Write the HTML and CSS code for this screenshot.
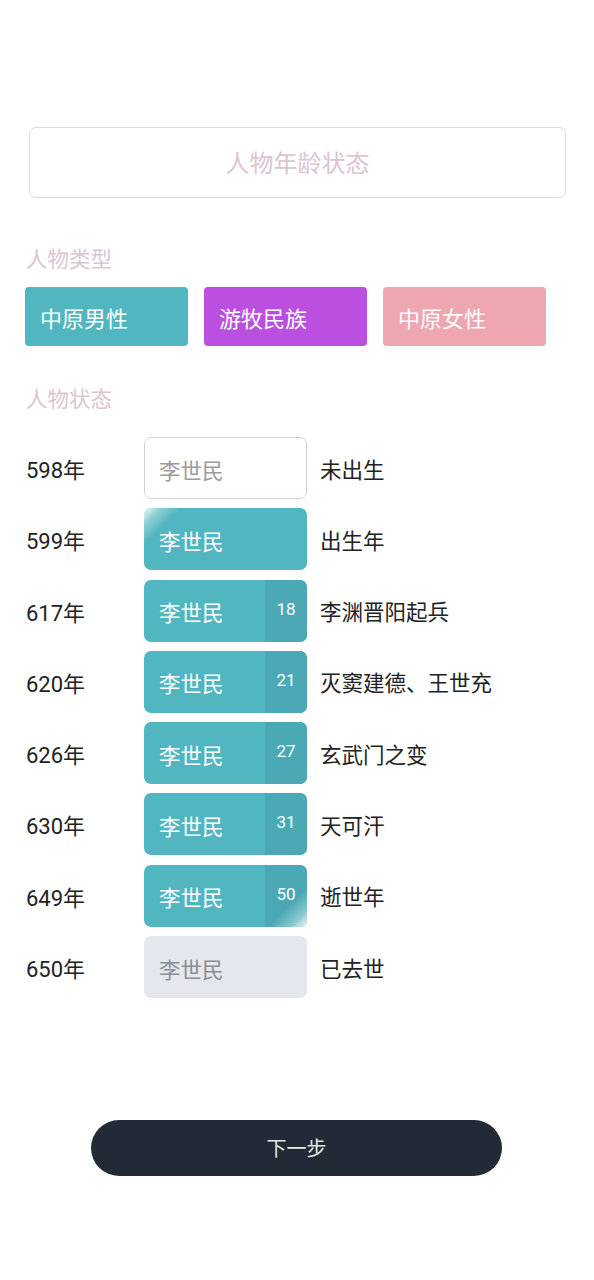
FILE: index.html
```html
<!DOCTYPE html>
<html lang="zh">
<head>
<meta charset="utf-8">
<title>人物年龄状态</title>
<link rel="stylesheet" href="styles.css">
</head>
<body>
<div class="page">
  <div class="title-box">人物年龄状态</div>

  <div class="section-label type-label">人物类型</div>
  <div class="types">
    <div class="type type-male">中原男性</div>
    <div class="type type-nomad">游牧民族</div>
    <div class="type type-female">中原女性</div>
  </div>

  <div class="section-label state-label">人物状态</div>
  <div class="rows">
    <div class="row">
      <div class="year">598年</div>
      <div class="card card-unborn"><span class="name">李世民</span></div>
      <div class="desc">未出生</div>
    </div>
    <div class="row">
      <div class="year">599年</div>
      <div class="card card-alive shine-start"><span class="name">李世民</span></div>
      <div class="desc">出生年</div>
    </div>
    <div class="row">
      <div class="year">617年</div>
      <div class="card card-alive"><span class="name">李世民</span><span class="age">18</span></div>
      <div class="desc">李渊晋阳起兵</div>
    </div>
    <div class="row">
      <div class="year">620年</div>
      <div class="card card-alive"><span class="name">李世民</span><span class="age">21</span></div>
      <div class="desc">灭窦建德、王世充</div>
    </div>
    <div class="row">
      <div class="year">626年</div>
      <div class="card card-alive"><span class="name">李世民</span><span class="age">27</span></div>
      <div class="desc">玄武门之变</div>
    </div>
    <div class="row">
      <div class="year">630年</div>
      <div class="card card-alive"><span class="name">李世民</span><span class="age">31</span></div>
      <div class="desc">天可汗</div>
    </div>
    <div class="row">
      <div class="year">649年</div>
      <div class="card card-alive shine-end"><span class="name">李世民</span><span class="age">50</span></div>
      <div class="desc">逝世年</div>
    </div>
    <div class="row">
      <div class="year">650年</div>
      <div class="card card-dead"><span class="name">李世民</span></div>
      <div class="desc">已去世</div>
    </div>
  </div>

  <div class="footer">
    <button class="next-btn">下一步</button>
  </div>
</div>
</body>
</html>
```

FILE: styles.css
```css
* {
  box-sizing: border-box;
}

html, body {
  margin: 0;
  padding: 0;
  background: #ffffff;
}

body {
  font-family: Roboto, "Noto Sans CJK SC", "Noto Sans", sans-serif;
  color: #222222;
}

.page {
  padding: 127px 0 0 25px;
  width: 594px;
}

.title-box {
  margin-left: 4px;
  width: 537px;
  height: 71px;
  border: 1.5px solid #e3d6de;
  border-radius: 7px;
  display: flex;
  align-items: center;
  justify-content: center;
  font-size: 24px;
  color: #dcc4d3;
  padding-bottom: 2px;
}

.section-label {
  font-size: 21.5px;
  line-height: 28px;
  color: #dcc4d3;
  padding-left: 1px;
}

.type-label {
  margin-top: 48px;
}

.types {
  margin-top: 13px;
  display: flex;
  gap: 16px;
}

.type {
  width: 163px;
  height: 59px;
  border-radius: 4px;
  color: #ffffff;
  font-size: 22px;
  display: flex;
  align-items: center;
  padding-left: 15px;
  padding-top: 1px;
}

.type-male {
  background: #52b6c0;
}

.type-nomad {
  background: #bb4fdf;
}

.type-female {
  background: #eea6b0;
}

.state-label {
  margin-top: 40px;
}

.rows {
  margin-top: 23px;
  display: flex;
  flex-direction: column;
  gap: 9.3px;
}

.row {
  display: flex;
  align-items: center;
  height: 62px;
}

.year {
  width: 119px;
  padding-left: 1px;
  font-size: 22px;
  color: #222222;
}

.card {
  width: 163px;
  height: 62px;
  border-radius: 7px;
  display: flex;
  align-items: center;
  position: relative;
  overflow: hidden;
  font-size: 21.5px;
}

.name {
  flex: 1;
  padding-left: 15px;
  padding-top: 2px;
}

.card-unborn {
  background: #ffffff;
  border: 1.5px solid #d3d3d3;
  color: #9b9b9b;
}

.card-unborn .name {
  padding-left: 14px;
}

.card-alive {
  background: #52b6c0;
  color: #ffffff;
}

.card-dead {
  background: #e4e7ed;
  color: #8a8d93;
}

.age {
  width: 42px;
  align-self: stretch;
  display: flex;
  align-items: center;
  justify-content: center;
  padding-bottom: 4px;
  background: #4aa9b4;
  font-size: 17px;
  color: #ffffff;
}

.shine-start::after,
.shine-end::after {
  content: "";
  position: absolute;
  inset: 0;
  pointer-events: none;
}

.shine-start::after {
  background: linear-gradient(135deg, rgba(255, 255, 255, 0.95) 0px, rgba(255, 255, 255, 0.35) 12px, rgba(255, 255, 255, 0) 26px);
}

.shine-end::after {
  background: linear-gradient(315deg, rgba(255, 255, 255, 0.95) 0px, rgba(255, 255, 255, 0.35) 12px, rgba(255, 255, 255, 0) 28px);
}

.desc {
  padding-left: 13px;
  font-size: 21.5px;
  color: #222222;
}

.footer {
  margin-top: 122px;
  padding-left: 66px;
}

.next-btn {
  width: 411px;
  height: 56px;
  border: none;
  border-radius: 28px;
  background: #212a35;
  color: #e4e6ea;
  font-family: Roboto, "Noto Sans CJK SC", sans-serif;
  font-size: 20px;
  display: flex;
  align-items: center;
  justify-content: center;
  padding: 0 0 2px 0;
}
```
